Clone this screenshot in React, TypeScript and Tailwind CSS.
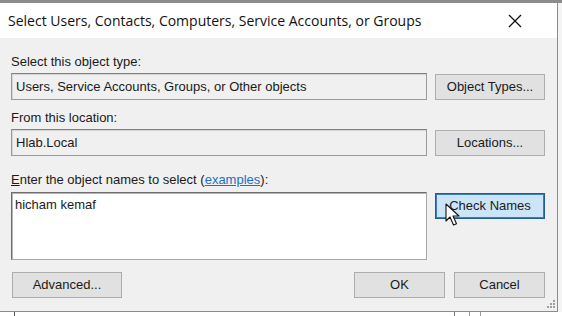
import React from "react";

const body = { fontFamily: '"Liberation Sans", Arial, sans-serif' };
const title = { fontFamily: '"Open Sans", "Noto Sans", sans-serif' };

function Btn({
  children,
  wide = true,
  active = false,
}: {
  children: React.ReactNode;
  wide?: boolean;
  active?: boolean;
}) {
  return (
    <div
      className={
        "h-[26px] flex items-center justify-center border text-[13px] text-[#1a1a1a] " +
        (wide ? "w-[110px] " : "w-[91px] ") +
        (active
          ? "bg-[#cce4f7] border-[#1e5d96] shadow-[inset_0_0_0_1px_#3d7dba]"
          : "bg-[#e1e1e1] border-[#adadad]")
      }
    >
      {children}
    </div>
  );
}

function Field({ value }: { value: string }) {
  return (
    <div className="h-[27px] w-[416px] flex items-center border border-[#9a9a9a] border-t-[#828282] bg-[#f0f0f0] px-[4px] text-[13px] text-[#1a1a1a] shadow-[inset_1px_1px_0_#d4d4d4]">
      {value}
    </div>
  );
}

function Cursor() {
  return (
    <svg className="absolute left-[10px] top-[10px]" width="16" height="24" viewBox="0 0 16 24">
      <path
        d="M1 1 L1 18 L5 14 L8.5 22 L11.5 20.8 L8 13 L14 13 Z"
        fill="#ffffff"
        stroke="#111"
        strokeWidth="1.1"
        strokeLinejoin="round"
      />
    </svg>
  );
}

export default function App() {
  return (
    <div className="w-[562px] h-[316px] overflow-hidden bg-white flex flex-col" style={body}>
      <div className="h-[3px] bg-[#8c8c8c] shrink-0" />
      <div className="flex h-[309px] shrink-0">
        <div className="w-[558px] flex flex-col border-r border-b border-[#8c8c8c] bg-[#f0f0f0]">
          {/* title bar */}
          <div className="h-[35px] shrink-0 bg-white flex items-center justify-between pl-[8px] pr-[35px]">
            <span className="text-[14px] text-[#111]" style={title}>
              Select Users, Contacts, Computers, Service Accounts, or Groups
            </span>
            <svg width="14" height="14" viewBox="0 0 14 14">
              <path d="M1 1 L13 13 M13 1 L1 13" stroke="#111" strokeWidth="1.3" />
            </svg>
          </div>

          <div className="flex-1 relative pl-[11px] pt-[14px] text-[13px] text-[#1a1a1a]">
            <div className="h-[19px] leading-[19px]">Select this object type:</div>
            <div className="flex items-center gap-[8px] mt-[2px]">
              <Field value="Users, Service Accounts, Groups, or Other objects" />
              <Btn>Object Types...</Btn>
            </div>

            <div className="h-[19px] leading-[19px] mt-[8px]">From this location:</div>
            <div className="flex items-center gap-[8px] mt-[2px]">
              <Field value="Hlab.Local" />
              <Btn>Locations...</Btn>
            </div>

            <div className="h-[19px] leading-[19px] mt-[14px]">
              <span className="underline">E</span>nter the object names to select (
              <span className="text-[#1e6fc7] underline">examples</span>):
            </div>
            <div className="flex items-start gap-[8px] mt-[3px]">
              <div className="h-[68px] w-[416px] border border-[#a8a8a8] border-t-[#6e6e6e] border-l-[#6e6e6e] bg-white px-[3px] pt-[2px] text-[13px] shadow-[inset_1px_1px_0_#b5b5b5]">
                hicham kemaf
              </div>
              <div className="relative mt-[1px]">
                <Btn active>Check Names</Btn>
                <Cursor />
              </div>
            </div>

            <div className="flex items-center mt-[12px] pr-[12px]">
              <div className="ml-[1px]">
                <Btn>Advanced...</Btn>
              </div>
              <div className="flex-1" />
              <Btn wide={false}>OK</Btn>
              <div className="ml-[9px]">
                <Btn wide={false}>Cancel</Btn>
              </div>
            </div>

            <svg className="absolute right-[1px] bottom-[2px]" width="10" height="10" viewBox="0 0 10 10">
              <g fill="#a0a0a0">
                <rect x="7" y="1" width="2" height="2" />
                <rect x="4" y="4" width="2" height="2" />
                <rect x="7" y="4" width="2" height="2" />
                <rect x="1" y="7" width="2" height="2" />
                <rect x="4" y="7" width="2" height="2" />
                <rect x="7" y="7" width="2" height="2" />
              </g>
            </svg>
          </div>
        </div>
        <div className="flex-1 bg-[#f4f4f4]" />
      </div>
      {/* window behind, peeking out below */}
      <div className="flex-1 flex bg-white">
        <div className="ml-[14px] w-px bg-[#555]" />
        <div className="ml-[439px] w-px bg-[#777]" />
        <div className="ml-[14px] w-px bg-[#999]" />
        <div className="ml-[10px] w-px bg-[#999]" />
      </div>
    </div>
  );
}
